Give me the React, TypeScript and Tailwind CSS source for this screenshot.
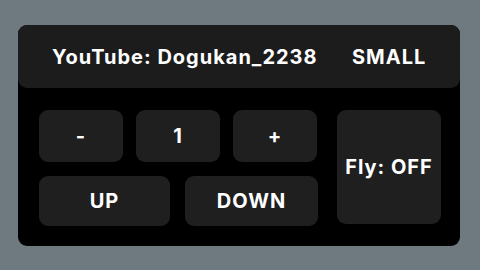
const Btn = ({ label, className }: { label: string, className: string }) => (
  <div
    className={`flex items-center justify-center rounded-[9px] bg-[#1f1f1f] text-[20px] font-bold tracking-[1px] text-white ${className}`}
  >
    {label}
  </div>
)

export default function App () {
  return (
    <div
      className="h-[270px] w-[480px] bg-[#6e7980] pl-[18px] pt-[25px]"
      style={{ fontFamily: 'Inter, "Noto Sans", sans-serif' }}
    >
      <div className="flex h-[221px] w-[442px] flex-col rounded-[9px] bg-black">
        {/* header */}
        <div className="flex h-[63px] items-center rounded-[9px] bg-[#1c1c1c] text-[20px] font-bold tracking-[1px] text-white">
          <span className="ml-[34px] w-[300px]">YouTube: Dogukan_2238</span>
          <span>SMALL</span>
        </div>

        {/* controls */}
        <div className="flex gap-[19px] pl-[21px] pt-[22px]">
          <div className="flex w-[279px] flex-col gap-[14px]">
            <div className="flex gap-[13px]">
              <Btn label="-" className="h-[52px] w-[84px]" />
              <Btn label="1" className="h-[52px] w-[84px]" />
              <Btn label="+" className="h-[52px] w-[84px]" />
            </div>
            <div className="flex gap-[15px]">
              <Btn label="UP" className="h-[50px] w-[131px]" />
              <Btn label="DOWN" className="h-[50px] w-[133px]" />
            </div>
          </div>
          <Btn label="Fly: OFF" className="h-[114px] w-[104px]" />
        </div>
      </div>
    </div>
  )
}
